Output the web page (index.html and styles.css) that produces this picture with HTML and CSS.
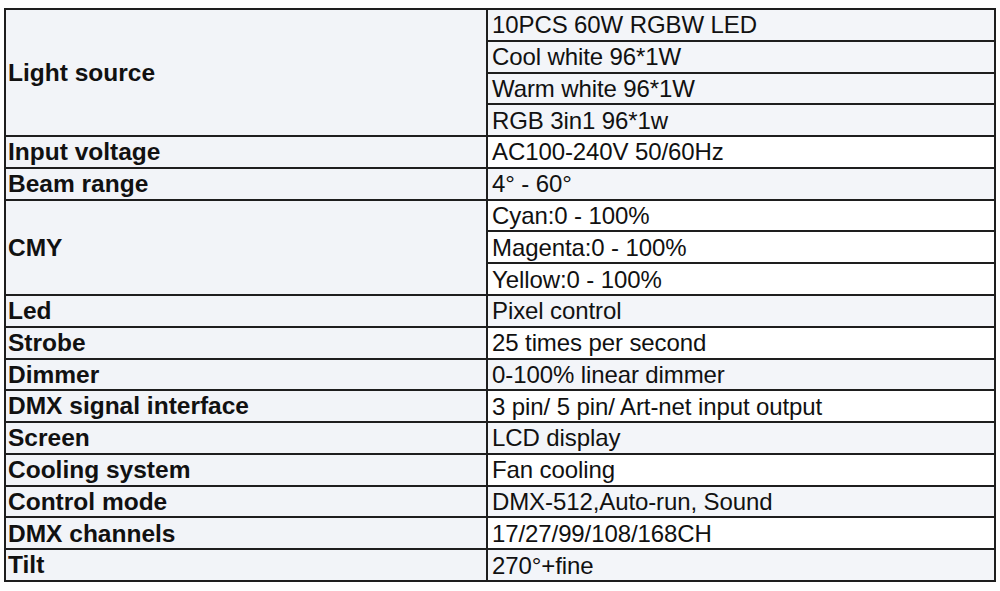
FILE: index.html
```html
<!DOCTYPE html>
<html>
<head>
<meta charset="utf-8">
<link rel="stylesheet" href="styles.css">
</head>
<body>
<div class="spec">
  <div class="k span4">Light source</div>
  <div class="v alt">10PCS 60W RGBW LED</div>
  <div class="v alt">Cool white 96*1W</div>
  <div class="v alt">Warm white 96*1W</div>
  <div class="v alt">RGB 3in1 96*1w</div>
  <div class="k">Input voltage</div>
  <div class="v">AC100-240V 50/60Hz</div>
  <div class="k">Beam range</div>
  <div class="v alt">4° - 60°</div>
  <div class="k span3">CMY</div>
  <div class="v">Cyan:0 - 100%</div>
  <div class="v">Magenta:0 - 100%</div>
  <div class="v">Yellow:0 - 100%</div>
  <div class="k">Led</div>
  <div class="v alt">Pixel control</div>
  <div class="k">Strobe</div>
  <div class="v">25 times per second</div>
  <div class="k">Dimmer</div>
  <div class="v alt">0-100% linear dimmer</div>
  <div class="k">DMX signal interface</div>
  <div class="v">3 pin/ 5 pin/ Art-net input output</div>
  <div class="k">Screen</div>
  <div class="v alt">LCD display</div>
  <div class="k">Cooling system</div>
  <div class="v">Fan cooling</div>
  <div class="k">Control mode</div>
  <div class="v alt">DMX-512,Auto-run, Sound</div>
  <div class="k">DMX channels</div>
  <div class="v">17/27/99/108/168CH</div>
  <div class="k">Tilt</div>
  <div class="v alt">270°+fine</div>
</div>
</body>
</html>
```

FILE: styles.css
```css
html, body {
  margin: 0;
  padding: 0;
  background: #ffffff;
}

body {
  font-family: "Liberation Sans", Arial, sans-serif;
  color: #111111;
}

.spec {
  box-sizing: border-box;
  width: 992px;
  height: 574px;
  margin: 8px 0 0 4px;
  border: 2px solid #1e1e1e;
  background: #1e1e1e;
  display: grid;
  grid-template-columns: 480px 506px;
  grid-template-rows: repeat(18, minmax(0, 1fr));
  gap: 2px;
}

.k {
  grid-column: 1;
  background: #f2f4f8;
  font-weight: bold;
  font-size: 24.5px;
  line-height: 1;
  padding: 1px 0 0 2px;
  display: flex;
  align-items: center;
  white-space: nowrap;
  min-height: 0;
}

.span4 { grid-row: span 4; }
.span3 { grid-row: span 3; }

.v {
  grid-column: 2;
  background: #ffffff;
  font-size: 24px;
  line-height: 1;
  letter-spacing: -0.1px;
  padding: 1px 0 0 4px;
  display: flex;
  align-items: center;
  white-space: nowrap;
  min-height: 0;
}

.v.alt {
  background: #f3f5f9;
}
```
